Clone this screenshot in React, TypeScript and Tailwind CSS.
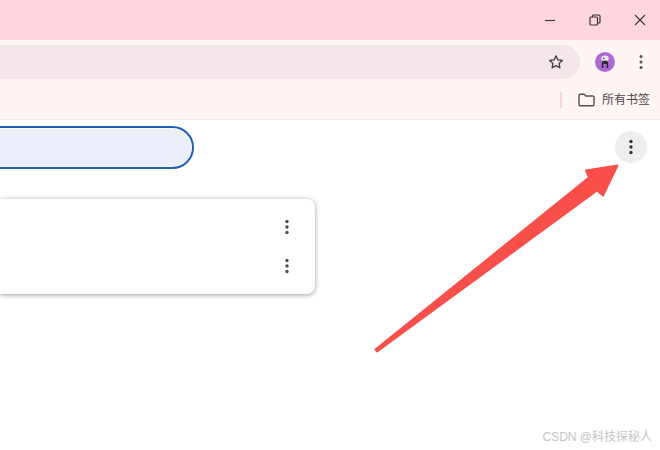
import React from "react";

const Kebab = ({ color = "#5f6368", r = 1.6, gap = 6 }: { color?: string; r?: number; gap?: number }) => (
  <svg width="6" height="18" viewBox="0 0 6 18" className="block">
    <circle cx="3" cy={9 - gap} r={r} fill={color} />
    <circle cx="3" cy="9" r={r} fill={color} />
    <circle cx="3" cy={9 + gap} r={r} fill={color} />
  </svg>
);

export default function App() {
  return (
    <div className="relative flex h-[450px] w-[660px] flex-col overflow-hidden bg-white font-['Liberation_Sans','Noto_Sans_CJK_SC',sans-serif]">
      {/* Title bar */}
      <div className="flex h-10 shrink-0 items-center justify-end bg-[#ffd6df] pr-[4px]">
        <div className="flex w-[32px] justify-center">
          <svg width="12" height="12" viewBox="0 0 12 12"><path d="M1 6.5h10" stroke="#333" strokeWidth="1.1" /></svg>
        </div>
        <div className="ml-[13px] flex w-[32px] justify-center">
          <svg width="12" height="12" viewBox="0 0 12 12" fill="none" stroke="#333" strokeWidth="1.2">
            <rect x="1" y="3" width="7.5" height="8" rx="1" />
            <path d="M3.5 3V2a1 1 0 0 1 1-1H10a1 1 0 0 1 1 1v6a1 1 0 0 1-1 1H8.5" />
          </svg>
        </div>
        <div className="ml-[13px] flex w-[32px] justify-center">
          <svg width="12" height="12" viewBox="0 0 12 12" fill="none" stroke="#333" strokeWidth="1.1"><path d="M1 1l10 10M11 1L1 11" /></svg>
        </div>
      </div>

      {/* Toolbar */}
      <div className="flex h-[45px] shrink-0 items-start bg-[#fff5f5]">
        <div className="mt-[5px] flex h-[34px] w-[580px] items-center justify-end rounded-r-[17px] bg-[#f3e5e8] pr-[16px]">
          <svg width="16" height="16" viewBox="0 0 24 24" fill="none" stroke="#45413f" strokeWidth="2" strokeLinejoin="round">
            <path d="M12 2.8l2.9 6.1 6.6.8-4.9 4.5 1.3 6.6L12 17.5l-5.9 3.3 1.3-6.6-4.9-4.5 6.6-.8z" />
          </svg>
        </div>
        <div className="ml-[15px] mt-[12px] flex h-5 w-5 items-center justify-center rounded-full bg-[#ab69d6]">
          <svg width="12" height="14" viewBox="0 0 12 14">
            <ellipse cx="6" cy="3.6" rx="3.8" ry="3" fill="#e9e4ec" />
            <circle cx="4.8" cy="3.4" r="0.8" fill="#55505a" />
            <path d="M2.8 13V8.5a3.2 3 0 0 1 6.4 0V13H7.6V9H4.4v4z" fill="#2d2a30" />
          </svg>
        </div>
        <div className="ml-[23px] mt-[13px]"><Kebab color="#55525a" r={1.5} gap={5.5} /></div>
      </div>

      {/* Bookmarks bar */}
      <div className="flex h-[35px] shrink-0 items-center border-b border-[#f3e6e6] bg-[#fff5f5] pb-[4px]">
        <div className="ml-[560px] h-4 w-[2px] bg-[#fad3dc]" />
        <svg className="ml-[16px]" width="17" height="14" viewBox="0 0 17 14" fill="none" stroke="#55504f" strokeWidth="1.4" strokeLinejoin="round">
          <path d="M1 2.2a1 1 0 0 1 1-1h4.2l1.6 1.8H15a1 1 0 0 1 1 1v7.8a1 1 0 0 1-1 1H2a1 1 0 0 1-1-1z" />
        </svg>
        <span className="ml-[7px] text-[12px] leading-none text-[#4a4646]">所有书签</span>
      </div>

      {/* Content */}
      <div className="flex flex-1 items-start justify-between pr-[13px]">
        <div className="flex flex-col">
          <div className="-ml-[4px] mt-[6px] h-[43px] w-[198px] rounded-r-[22px] border-2 border-[#1f5fb4] bg-[#eaeef8] shadow-[inset_0_0_0_1px_#f6f9ff]" />
          <div className="mt-[30px] flex h-[95px] w-[315px] flex-col items-end rounded-r-[8px] bg-white pr-[25px] pt-[8px] shadow-[0_1px_5px_rgba(0,0,0,0.4)]">
            <div className="flex h-[39px] items-center"><Kebab color="#505050" r={1.7} gap={5.5} /></div>
            <div className="flex h-[39px] items-center"><Kebab color="#505050" r={1.7} gap={5.5} /></div>
          </div>
        </div>
        <div className="mt-[11px] flex h-8 w-8 items-center justify-center rounded-full bg-[#eeeeee]">
          <Kebab color="#333333" r={1.7} gap={5.5} />
        </div>
      </div>

      {/* Annotation arrow */}
      <svg className="absolute left-0 top-0" width="660" height="450" viewBox="0 0 660 450" fill="#f94f4b" stroke="#f94f4b" strokeWidth="2" strokeLinejoin="round">
        <polygon points="375.5,349.5 377,351.5 597,190.5 603,195.5 617.5,165.5 586,170.5 589,177.5" />
      </svg>

      {/* Watermark */}
      <span className="absolute right-[8px] top-[430px] text-[12px] leading-[14px] text-[#c4c4c4]">CSDN @科技探秘人</span>
    </div>
  );
}
